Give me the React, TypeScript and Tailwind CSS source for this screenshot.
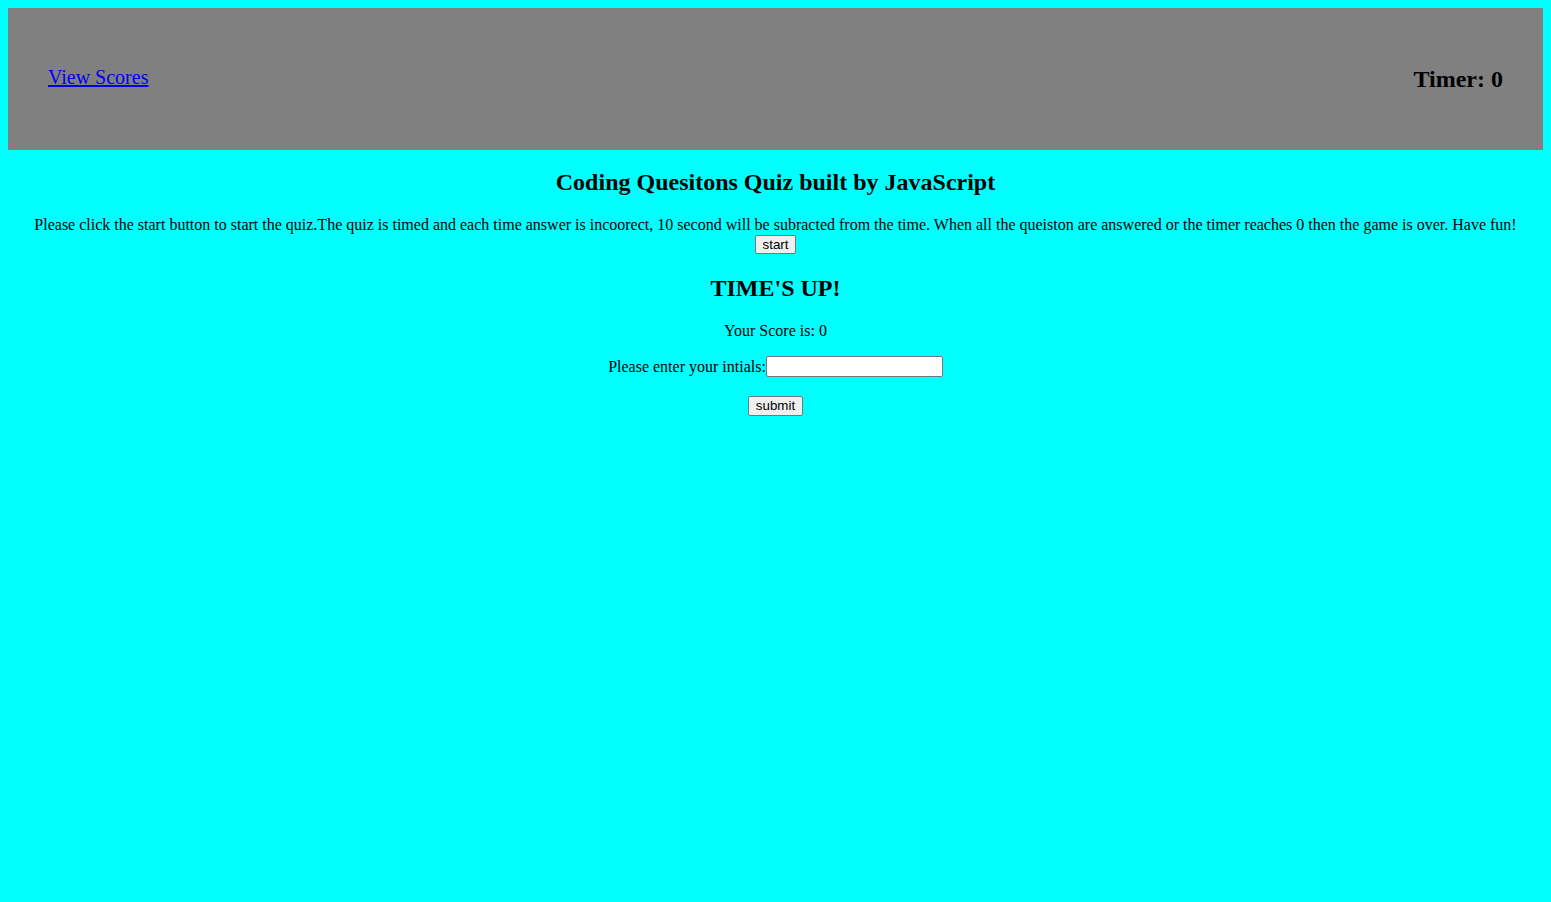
export default function App() {
  return (
    <div className="min-h-screen bg-[#00ffff] p-2 font-['Liberation_Serif',serif] text-black">
      <header className="flex h-[142px] items-center justify-between bg-[#808080] px-10">
        <a href="#" className="-mt-1 text-xl leading-6 text-[#0000ee] underline">
          View Scores
        </a>
        <h2 className="text-2xl leading-7 font-bold">Timer: 0</h2>
      </header>

      <main className="text-center">
        <h2 className="mt-[18px] text-2xl leading-7 font-bold">Coding Quesitons Quiz built by JavaScript</h2>
        <p className="mt-[20px] text-base leading-[18px]">
          Please click the start button to start the quiz.The quiz is timed and each time answer is incoorect, 10 second
          will be subracted from the time. When all the queiston are answered or the timer reaches 0 then the game is
          over. Have fun!
        </p>
        <button className="mx-auto mt-px block rounded-[2px] border border-[#767676] bg-[#efefef] px-[7px] py-px font-['Liberation_Sans',sans-serif] text-[13.33px] leading-[15px]">
          start
        </button>

        <h2 className="mt-[20px] text-2xl leading-7 font-bold">TIME'S UP!</h2>
        <p className="mt-[20px] text-base leading-[18px]">Your Score is: 0</p>
        <div className="mt-[16px] flex items-center justify-center text-base leading-[18px]">
          <label>Please enter your intials:</label>
          <input
            type="text"
            className="h-[21px] w-[177px] rounded-[2px] border border-[#767676] bg-white px-[2px] text-[13.33px]"
          />
        </div>
        <button className="mx-auto mt-[19px] block rounded-[2px] border border-[#767676] bg-[#efefef] px-[7px] py-px font-['Liberation_Sans',sans-serif] text-[13.33px] leading-[16px]">
          submit
        </button>
      </main>
    </div>
  )
}
